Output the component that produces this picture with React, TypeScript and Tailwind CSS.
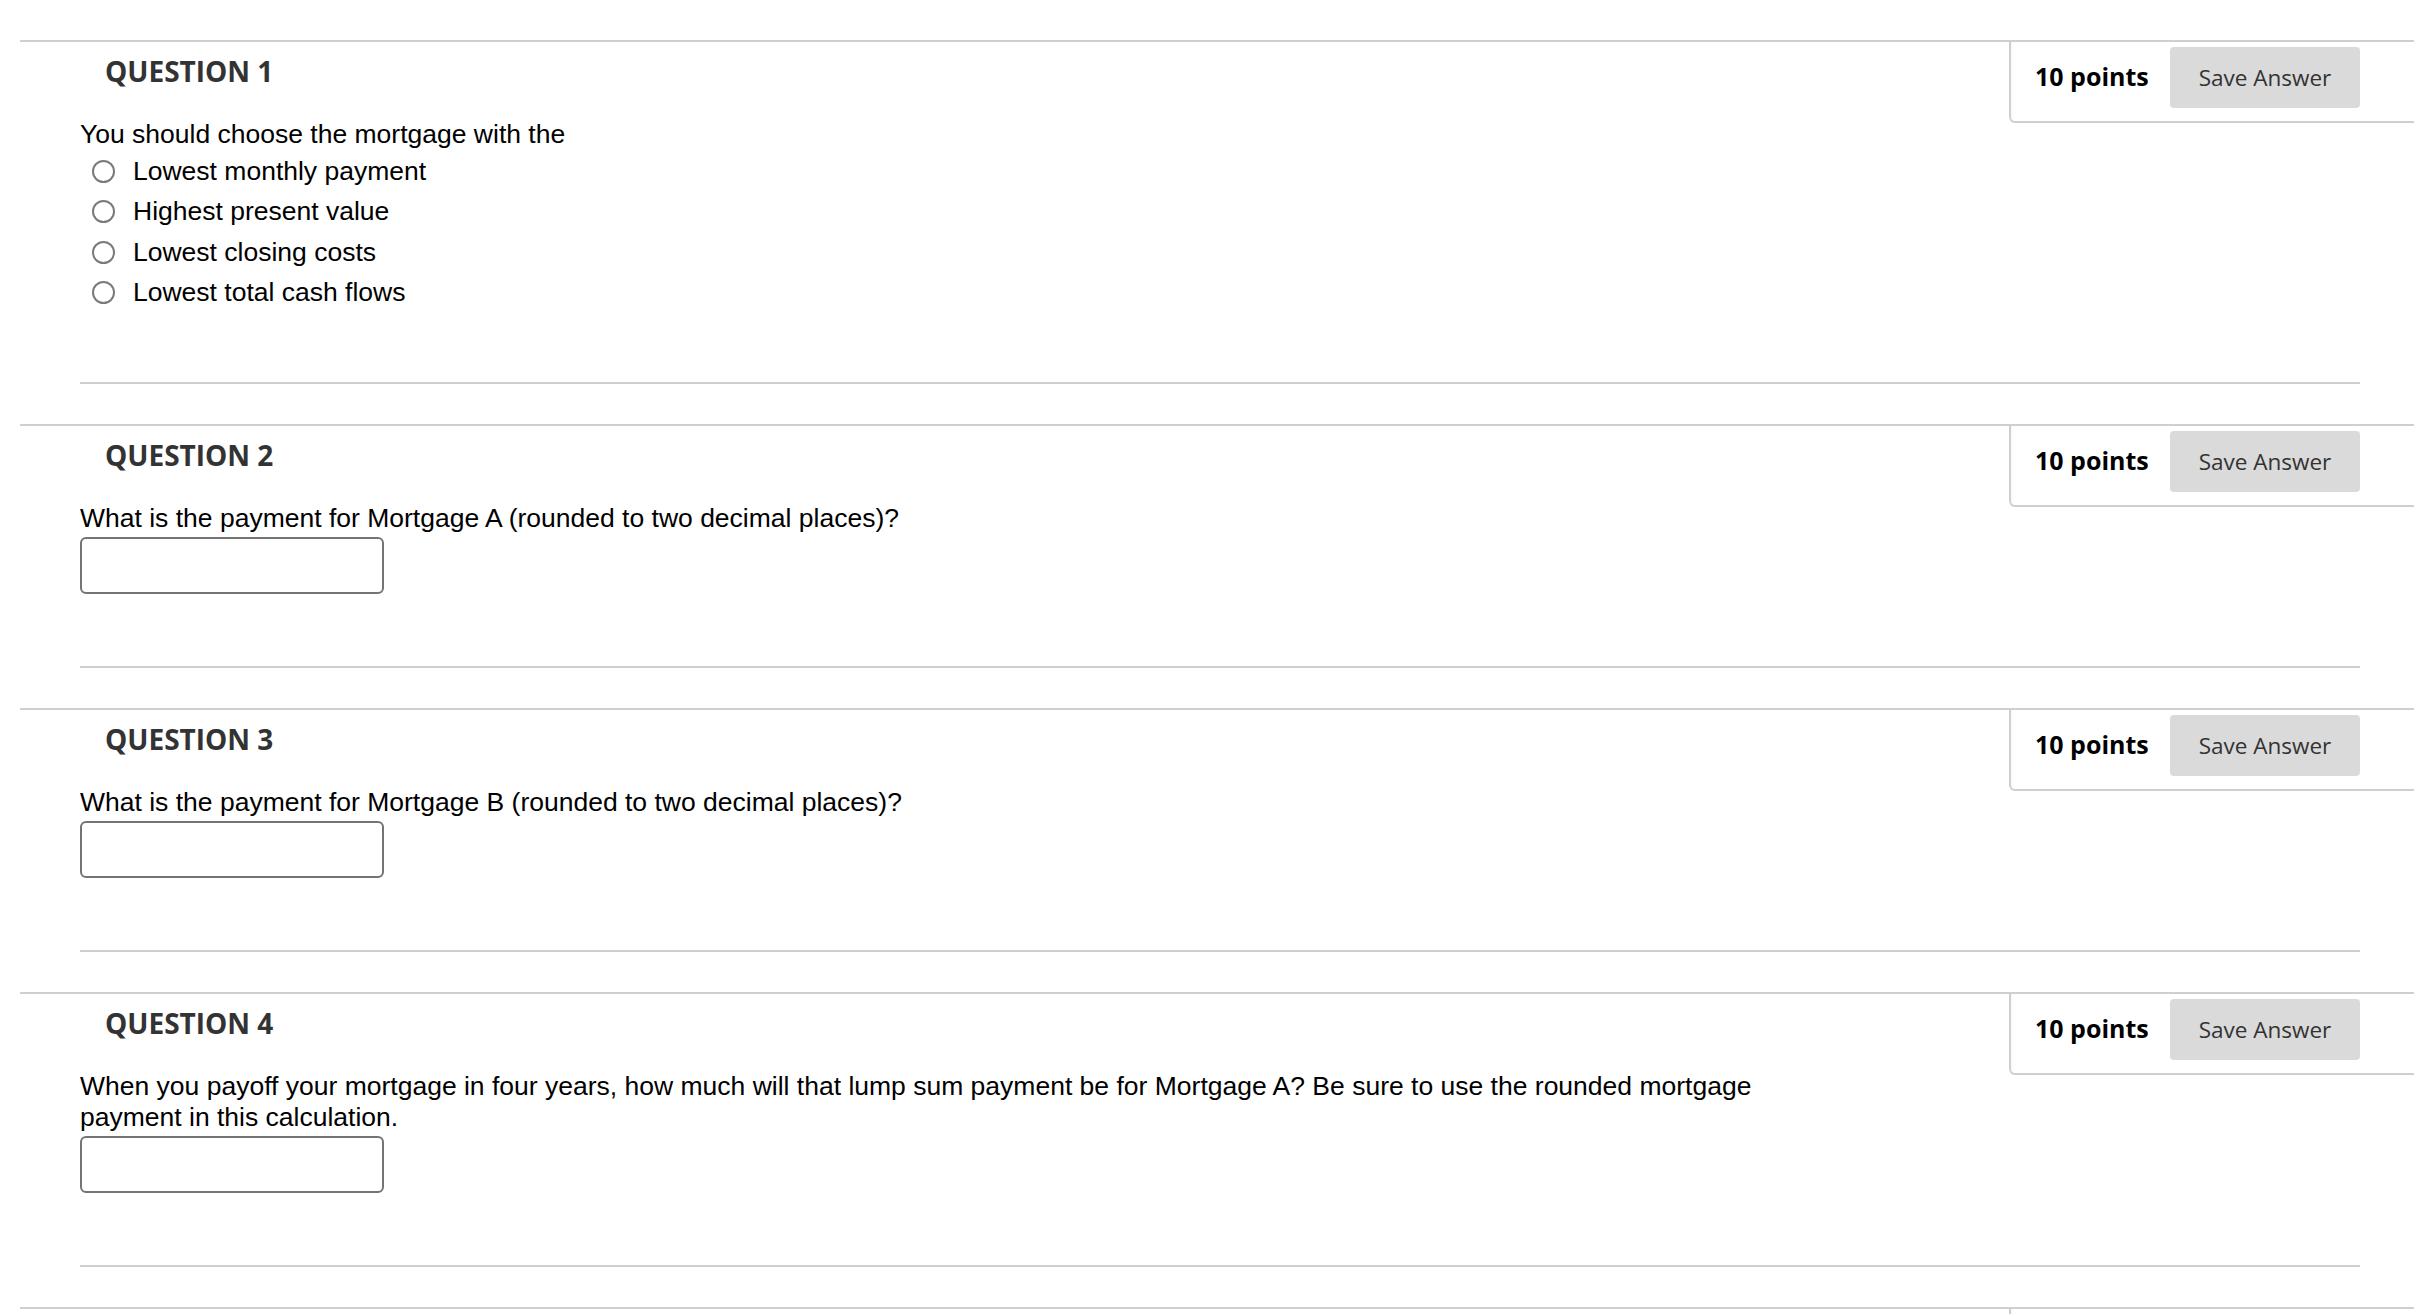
const OPTIONS = [
  'Lowest monthly payment',
  'Highest present value',
  'Lowest closing costs',
  'Lowest total cash flows',
]

type Question = {
  num: number
  prompt?: string
  kind: 'radio' | 'input' | 'none'
}

const QUESTIONS: Question[] = [
  { num: 1, prompt: 'You should choose the mortgage with the', kind: 'radio' },
  { num: 2, prompt: 'What is the payment for Mortgage A (rounded to two decimal places)?', kind: 'input' },
  { num: 3, prompt: 'What is the payment for Mortgage B (rounded to two decimal places)?', kind: 'input' },
  {
    num: 4,
    prompt:
      'When you payoff your mortgage in four years, how much will that lump sum payment be for Mortgage A? Be sure to use the rounded mortgage payment in this calculation.',
    kind: 'input',
  },
  { num: 5, kind: 'none' },
]

function PointsBox() {
  return (
    <div className="w-[405px] shrink-0 flex items-start pl-[24px] pr-[54px] pt-[5px] pb-[13px] border-l-2 border-b-2 border-[#cfcfcf] rounded-bl-[6px] shadow-[inset_3px_0_4px_-3px_rgba(0,0,0,0.06)]">
      <span className="mt-[17px] text-[25px] leading-none font-bold text-black font-['Open_Sans',sans-serif]">
        10 points
      </span>
      <button className="ml-auto w-[190px] h-[61px] flex items-center justify-center bg-[#dadada] rounded-[4px] text-[22.5px] text-[#333] font-['Open_Sans',sans-serif]">
        Save Answer
      </button>
    </div>
  )
}

function QuestionBlock({ q }: { q: Question }) {
  return (
    <section className="border-t-2 border-[#cfcfcf]">
      <div className="flex items-start">
        <div className={q.kind === 'radio' ? 'flex-1 pl-[60px] pb-[69px]' : 'flex-1 pl-[60px] pb-[72px]'}>
          <h3 className="pl-[25px] pt-[15px] text-[28px] leading-[28px] font-bold text-[#333] font-['Open_Sans',sans-serif]">
            QUESTION {q.num}
          </h3>
          {q.prompt && (
            <div className="mt-[34px] max-w-[1720px] text-[26.5px] leading-[31px] text-black font-['Liberation_Sans',Arial,sans-serif]">
              <p>{q.prompt}</p>
              {q.kind === 'radio' && (
                <div className="mt-[1px]">
                  {OPTIONS.map((opt) => (
                    <label key={opt} className="flex items-center h-[40.5px]">
                      <span className="ml-[12px] w-[23px] h-[23px] rounded-full border-2 border-[#7a7a7a] bg-white" />
                      <span className="ml-[18px]">{opt}</span>
                    </label>
                  ))}
                </div>
              )}
              {q.kind === 'input' && (
                <div className="mt-[3px] w-[304px] h-[57px] border-2 border-[#747474] rounded-[6px] bg-white" />
              )}
            </div>
          )}
        </div>
        <PointsBox />
      </div>
      <div className="ml-[60px] mr-[54px] h-[2px] bg-[#cfcfcf]" />
      <div className="h-[40px]" />
    </section>
  )
}

export default function App() {
  return (
    <div className="h-screen overflow-hidden bg-white pt-[40px] pl-[20px]">
      {QUESTIONS.map((q) => (
        <QuestionBlock key={q.num} q={q} />
      ))}
    </div>
  )
}
